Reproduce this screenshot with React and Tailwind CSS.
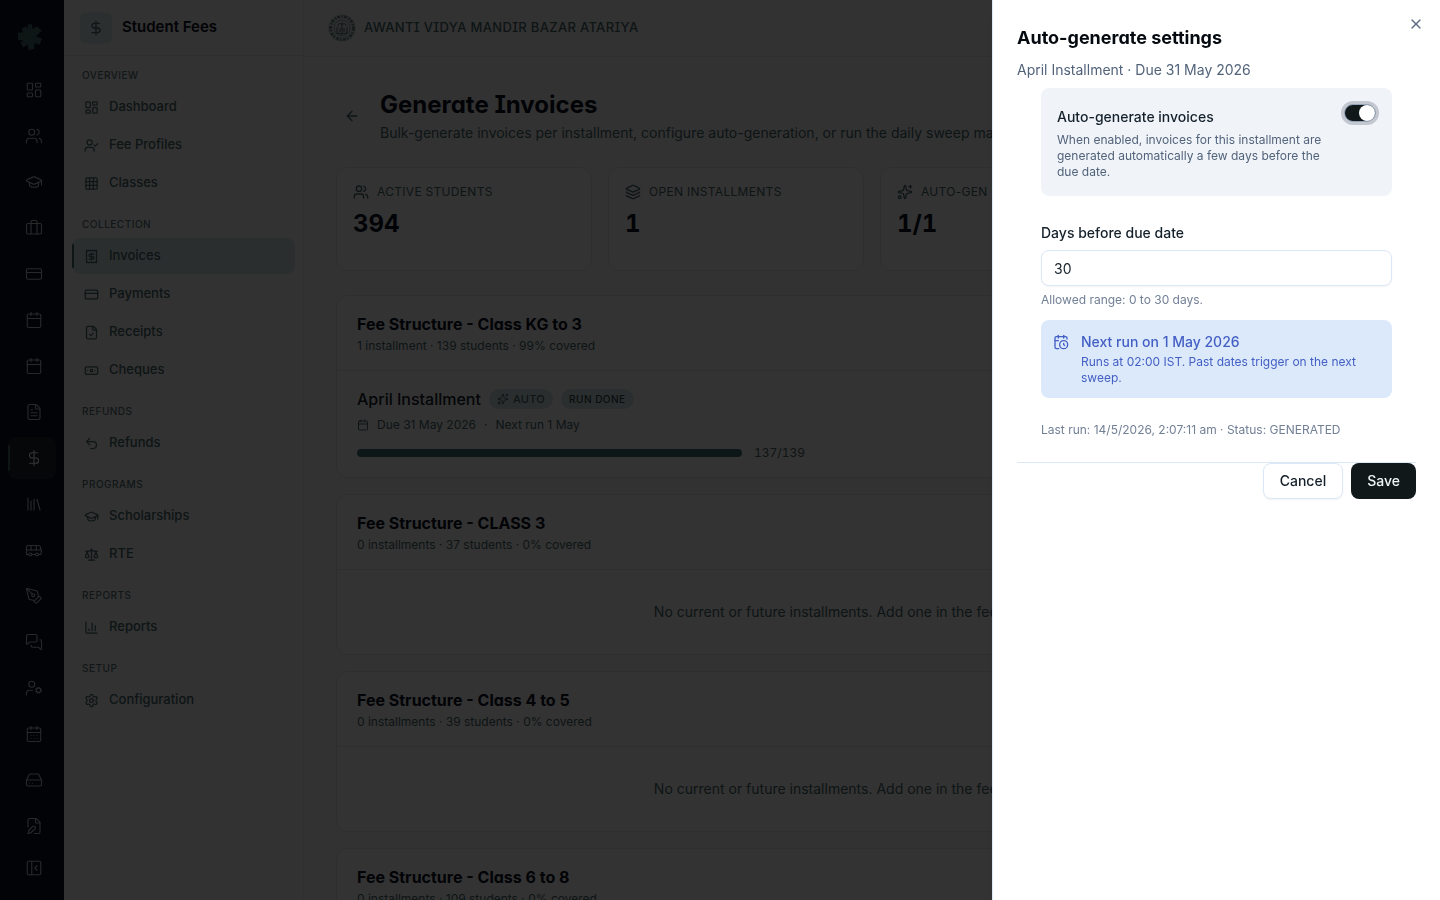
import { useState } from 'react'
import clsx from 'clsx'
import {
  ArrowLeft, Banknote, Briefcase, Bus, Calendar, CalendarClock, CalendarDays, ChartColumn, CreditCard,
  DollarSign, FileCheck, FilePen, FileText, GraduationCap, Grid3x3, HardDrive, Layers, LayoutDashboard,
  Library, MessagesSquare, PanelLeftClose, PenTool, Receipt, Scale, Settings, Sparkles, Undo2,
  UserCheck, UserCog, Users, X,
} from 'lucide-react'

const RAIL = [
  { label: 'Dashboard', icon: LayoutDashboard },
  { label: 'People', icon: Users },
  { label: 'Academics', icon: GraduationCap },
  { label: 'Staff', icon: Briefcase },
  { label: 'Cards', icon: CreditCard },
  { label: 'Calendar', icon: Calendar },
  { label: 'Timetable', icon: Calendar },
  { label: 'Documents', icon: FileText },
  { label: 'Fees', icon: DollarSign, active: true },
  { label: 'Library', icon: Library },
  { label: 'Transport', icon: Bus },
  { label: 'Design', icon: PenTool },
  { label: 'Messages', icon: MessagesSquare },
  { label: 'User settings', icon: UserCog },
  { label: 'Schedule', icon: CalendarDays },
  { label: 'Storage', icon: HardDrive },
  { label: 'Forms', icon: FilePen },
]

const SECTIONS = [
  {
    title: 'Overview',
    items: [
      { label: 'Dashboard', icon: LayoutDashboard },
      { label: 'Fee Profiles', icon: UserCheck },
      { label: 'Classes', icon: Grid3x3 },
    ],
  },
  {
    title: 'Collection',
    items: [
      { label: 'Invoices', icon: Receipt, active: true },
      { label: 'Payments', icon: CreditCard },
      { label: 'Receipts', icon: FileCheck },
      { label: 'Cheques', icon: Banknote },
    ],
  },
  { title: 'Refunds', items: [{ label: 'Refunds', icon: Undo2 }] },
  {
    title: 'Programs',
    items: [
      { label: 'Scholarships', icon: GraduationCap },
      { label: 'RTE', icon: Scale },
    ],
  },
  { title: 'Reports', items: [{ label: 'Reports', icon: ChartColumn }] },
  { title: 'Setup', items: [{ label: 'Configuration', icon: Settings }] },
]

const STATS = [
  { label: 'Active students', value: '394', icon: Users },
  { label: 'Open installments', value: '1', icon: Layers },
  { label: 'Auto-gen', value: '1/1', icon: Sparkles },
  { label: 'Coverage', value: '99%', icon: Receipt },
]

const STRUCTURES = [
  { name: 'Fee Structure - Class KG to 3', meta: '1 installment · 139 students · 99% covered', installment: true },
  { name: 'Fee Structure - CLASS 3', meta: '0 installments · 37 students · 0% covered' },
  { name: 'Fee Structure - Class 4 to 5', meta: '0 installments · 39 students · 0% covered' },
  { name: 'Fee Structure - Class 6 to 8', meta: '0 installments · 109 students · 0% covered' },
]

// Single-storey a and serifed I for headings
const display = "font-[Inter,sans-serif] [font-feature-settings:'cv11','cv08']"

function Logo() {
  return (
    <svg viewBox="0 0 24 26" className="ml-[18px] h-[26px] w-6 text-[#47686c]" fill="currentColor" aria-hidden="true">
      <path d="M9.6 0.8 14 0 14.6 5.2 18.6 2.2 23.8 6.4 20 10.4 18 12.6 24 14.6 21.6 20.8 16.6 19 16 25 10.6 26 9.6 20.4 5.2 23.4 2.4 18.6 5.4 16.4 0.2 16 0 8.4 5 8.6 3.8 4.4 8 2.6 10 5.4Z" />
    </svg>
  )
}

function Rail() {
  return (
    <aside className="flex w-16 shrink-0 flex-col bg-[#0a0f24] text-[#c2cace]">
      <div className="flex h-[69px] items-center pt-1">
        <Logo />
      </div>
      <nav className="flex flex-1 flex-col gap-1 px-2" aria-label="Modules">
        {RAIL.map(({ label, icon: Icon, active }) => (
          <a key={label} href="#" aria-label={label}
            className={clsx('relative flex h-[42px] items-center rounded-lg pl-[17px]', active && 'bg-[#1b2530] text-white')}>
            {active && <span className="absolute top-2 bottom-2 left-0 w-0.5 rounded-full bg-[#47686c]" />}
            <Icon size={18} strokeWidth={1.5} />
          </a>
        ))}
      </nav>
      <button type="button" aria-label="Collapse sidebar" className="mx-2 mb-[11px] flex h-[42px] items-center pl-[17px]">
        <PanelLeftClose size={18} strokeWidth={1.5} />
      </button>
    </aside>
  )
}

function Sidebar() {
  return (
    <aside className="w-60 shrink-0 border-r border-[#e6ebeb] bg-[#fafafa]">
      <div className="flex h-14 items-center gap-[10px] border-b border-[#e2e8e8] px-4">
        <span className="flex size-8 items-center justify-center rounded-lg bg-[#d6e8ea] text-[#47686c]">
          <DollarSign size={16} />
        </span>
        <span className={clsx(display, 'text-[15px] font-semibold text-[#0a0f24]')}>Student Fees</span>
      </div>
      <nav className="flex flex-col gap-4 px-2 py-3" aria-label="Student fees">
        {SECTIONS.map(section => (
          <div key={section.title}>
            <h2 className="mb-[6px] px-[10px] text-[10px] leading-[15px] font-medium tracking-wider text-[#587478] uppercase">
              {section.title}
            </h2>
            <div className="flex flex-col gap-0.5">
              {section.items.map(({ label, icon: Icon, active }) => (
                <a key={label} href="#"
                  className={clsx(
                    'relative flex h-9 items-center gap-[10px] rounded-lg px-3 text-[13px] font-medium text-[#47686c]',
                    active && 'bg-[#d2e6ea]'
                  )}>
                  {active && <span className="absolute top-[6px] bottom-[6px] left-0 w-0.5 rounded-full bg-[#47686c]" />}
                  <Icon size={15} />
                  {label}
                </a>
              ))}
            </div>
          </div>
        ))}
      </nav>
    </aside>
  )
}

function SchoolCrest() {
  return (
    <svg viewBox="0 0 28 28" className="size-7" fill="none" aria-hidden="true">
      <circle cx="14" cy="14" r="14" fill="#dce4e4" />
      <circle cx="14" cy="14" r="11.5" stroke="#6f8b8e" strokeWidth="3" strokeDasharray="3 1.4 1.6 1" />
      <circle cx="14" cy="14" r="8" stroke="#8aa2a4" />
      <path d="M14 8v12M10 12c0-3 3-3 4-1 1-2 4-2 4 1M9 13v6l5 1 5-1v-6M11 15h2M15 15h2M11 17h2M15 17h2" stroke="#47686c" />
    </svg>
  )
}

function StatCard({ label, value, icon: Icon }) {
  return (
    <div className="min-h-[104px] rounded-xl border border-[#e2eaea] bg-white p-4">
      <div className="flex items-center gap-2 text-xs tracking-wide text-[#47686c] uppercase">
        <Icon size={16} /> {label}
      </div>
      <div className={clsx(display, 'mt-2 text-2xl font-bold text-[#0a0f24] tabular-nums')}>{value}</div>
    </div>
  )
}

function Installment() {
  return (
    <div className="px-5 py-4">
      <div className="flex items-center gap-2">
        <h3 className="text-base font-medium text-[#14202a]">April Installment</h3>
        <span className="flex h-5 items-center gap-1 rounded-full bg-[#d2e6ea] px-2 text-[11px] font-medium tracking-wide text-[#47686c]">
          <Sparkles size={12} /> AUTO
        </span>
        <span className="flex h-5 items-center rounded-full bg-[#d2e6ea] px-2 text-[10px] font-medium tracking-wider text-[#2f484c]">
          RUN DONE
        </span>
      </div>
      <div className="mt-[6px] flex items-center gap-2 text-xs text-[#47686c]">
        <Calendar size={12} />
        <span>Due 31 May 2026</span>
        <span>·</span>
        <span>Next run 1 May</span>
      </div>
      <div className="mt-3 flex max-w-md items-center gap-3">
        <div className="h-2 flex-1 rounded-full bg-[#47757a]" role="progressbar" aria-label="Invoices generated"
          aria-valuenow={137} aria-valuemax={139} />
        <span className="text-xs text-[#47686c] tabular-nums">137/139</span>
      </div>
    </div>
  )
}

function StructureCard({ name, meta, installment }) {
  return (
    <section className="shrink-0 rounded-xl border border-[#dfe9e9] bg-white">
      <div className="border-b border-[#dfe9e9] px-5 py-4">
        <h2 className={clsx(display, 'text-base font-bold text-[#0a0f24]')}>{name}</h2>
        <p className="mt-0.5 text-xs text-[#47686c]">{meta}</p>
      </div>
      {installment ? <Installment /> : (
        <p className="py-8 text-center text-sm text-[#47686c]">
          No current or future installments. Add one in the fee structure tab.
        </p>
      )}
    </section>
  )
}

function Main() {
  return (
    <div className="flex min-w-0 flex-1 flex-col bg-[#fafafa]">
      <header className="flex h-[57px] shrink-0 items-center gap-2 border-b border-[#e6ebeb] px-6">
        <SchoolCrest />
        <span className={clsx(display, 'text-[13px] font-medium tracking-wide text-[#47686c]')}>
          AWANTI VIDYA MANDIR BAZAR ATARIYA
        </span>
      </header>
      <main className="flex min-h-0 flex-1 flex-col gap-6 overflow-hidden px-8 pt-8">
        <div className="flex items-center gap-3">
          <button type="button" aria-label="Back" className="flex size-8 items-center justify-center text-[#47686c]">
            <ArrowLeft size={16} />
          </button>
          <div>
            <h1 className={clsx(display, 'text-2xl font-bold text-[#0a0f24]')}>Generate Invoices</h1>
            <p className="mt-0.5 text-sm text-[#47686c]">
              Bulk-generate invoices per installment, configure auto-generation, or run the daily sweep manually.
            </p>
          </div>
        </div>
        <div className="grid grid-cols-4 gap-4">
          {STATS.map(stat => <StatCard key={stat.label} {...stat} />)}
        </div>
        <div className="flex flex-col gap-4">
          {STRUCTURES.map(s => <StructureCard key={s.name} {...s} />)}
        </div>
      </main>
    </div>
  )
}

function SettingsSheet() {
  const [enabled, setEnabled] = useState(true)
  const [days, setDays] = useState('30')

  return (
    <div role="dialog" aria-labelledby="sheet-title"
      className="fixed inset-y-0 right-0 w-full max-w-md border-l border-[#dbe7f5] bg-white p-6 shadow-lg">
      <button type="button" aria-label="Close" className="absolute top-4 right-4 text-[#5b6b82]">
        <X size={16} />
      </button>
      <div className="flex flex-col gap-2">
        <h2 id="sheet-title" className={clsx(display, 'text-lg font-bold text-[#050a10]')}>Auto-generate settings</h2>
        <p className="text-sm text-[#52637a]">April Installment · Due 31 May 2026</p>
      </div>

      <div className="mt-2 flex flex-col gap-6 px-6 pb-6">
        <div className="flex items-start justify-between gap-4 rounded-lg bg-[#f0f4f9] p-4">
          <div>
            <div>
              <label htmlFor="auto-generate" className="text-sm font-medium text-[#14202a]">Auto-generate invoices</label>
            </div>
            <p className="mt-1 text-xs text-[#52637a]">
              When enabled, invoices for this installment are generated automatically a few days before the due date.
            </p>
          </div>
          <span className="relative flex h-[18px] w-8 shrink-0 items-center rounded-full ring-3 ring-[#c3c7cf]">
            <input id="auto-generate" type="checkbox" role="switch" checked={enabled}
              onChange={e => setEnabled(e.target.checked)}
              className="peer h-[18px] w-8 appearance-none rounded-full border border-[#94a3b8] bg-[#cbd5e1] checked:bg-[#10181a]" />
            <span className="pointer-events-none absolute left-px size-4 rounded-full bg-white peer-checked:left-auto peer-checked:right-px" />
          </span>
        </div>

        <div>
          <div className="mb-[6px]">
            <label htmlFor="days-before" className="text-sm font-medium text-[#14202a]">Days before due date</label>
          </div>
          <input id="days-before" type="number" min={0} max={30} value={days} onChange={e => setDays(e.target.value)}
            className="block h-9 w-full rounded-lg border border-[#dbe8f8] bg-white px-3 text-sm text-[#14202a] shadow-xs outline-none" />
          <p className="mt-[6px] text-xs text-[#728096]">Allowed range: 0 to 30 days.</p>
          <div className="mt-3 flex items-start gap-3 rounded-lg bg-[#dce9fb] p-3 text-[#435fc4]">
            <CalendarClock size={16} className="mt-0.5 shrink-0" />
            <div>
              <p className="text-sm font-medium">Next run on 1 May 2026</p>
              <p className="mt-0.5 text-xs">Runs at 02:00 IST. Past dates trigger on the next sweep.</p>
            </div>
          </div>
        </div>

        <p className="text-xs text-[#728096]">Last run: 14/5/2026, 2:07:11 am · Status: GENERATED</p>
      </div>

      <div className="flex justify-end gap-2 border-t border-[#dbe8f8]">
        <button type="button" className="h-9 rounded-lg border border-[#dbe8f8] bg-white px-4 text-sm font-medium text-[#14202a] shadow-xs">
          Cancel
        </button>
        <button type="button" className="h-9 rounded-lg bg-[#10181a] px-4 text-sm font-medium text-[#f1f5f9]">
          Save
        </button>
      </div>
    </div>
  )
}

export default function App() {
  return (
    <div className="flex h-screen overflow-hidden font-[Inter,sans-serif]">
      <Rail />
      <Sidebar />
      <Main />
      <div className="fixed inset-0 bg-black/80" />
      <SettingsSheet />
    </div>
  )
}
